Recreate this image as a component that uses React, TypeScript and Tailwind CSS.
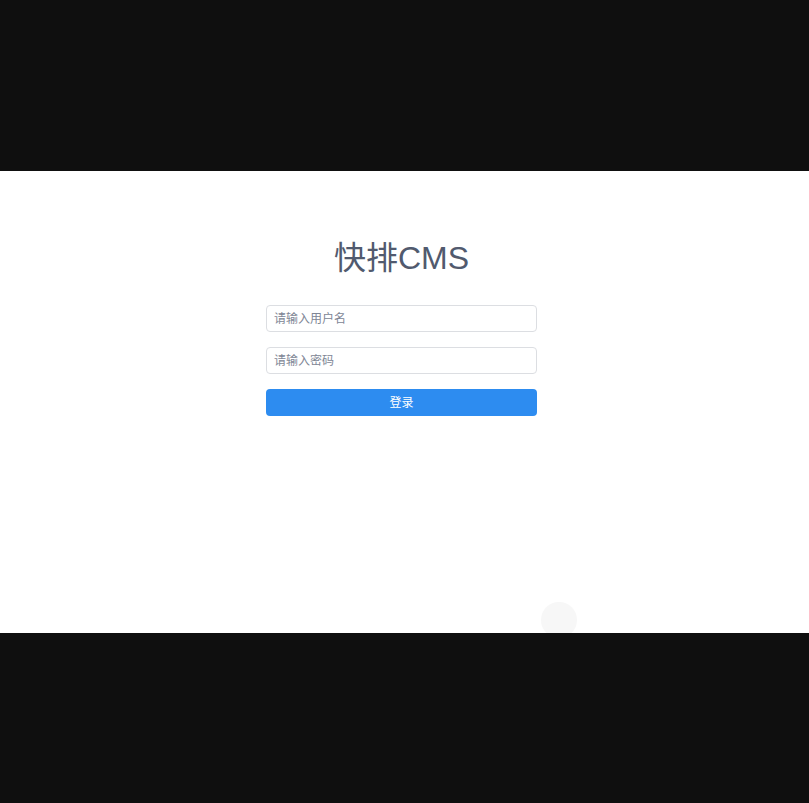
export default function App() {
  return (
    <div
      className="flex h-[803px] w-full flex-col bg-[#0f0f0f]"
      style={{ fontFamily: '"Liberation Sans", "Noto Sans CJK SC", sans-serif' }}
    >
      <div className="h-[171px] shrink-0" />
      <div className="relative h-[462px] shrink-0 overflow-hidden bg-white">
        <div className="ml-[266px] flex w-[271px] flex-col pt-[66px]">
          <h1 className="text-center text-[32px] leading-[42px] text-[#515a6e]">快排CMS</h1>
          <input
            className="mt-[26px] h-[27px] rounded border border-[#dcdee2] px-[7px] text-[12px] text-[#515a6e] outline-none placeholder:text-[#808695]"
            placeholder="请输入用户名"
          />
          <input
            type="password"
            className="mt-[15px] h-[27px] rounded border border-[#dcdee2] px-[7px] text-[12px] text-[#515a6e] outline-none placeholder:text-[#808695]"
            placeholder="请输入密码"
          />
          <button className="mt-[15px] h-[27px] rounded bg-[#2d8cf0] pt-[1px] text-[12px] text-white">
            登录
          </button>
        </div>
        <div className="absolute left-[541px] top-[431px] h-[36px] w-[36px] rounded-full bg-[#f7f7f7]" />
      </div>
      <div className="flex-1" />
    </div>
  );
}
